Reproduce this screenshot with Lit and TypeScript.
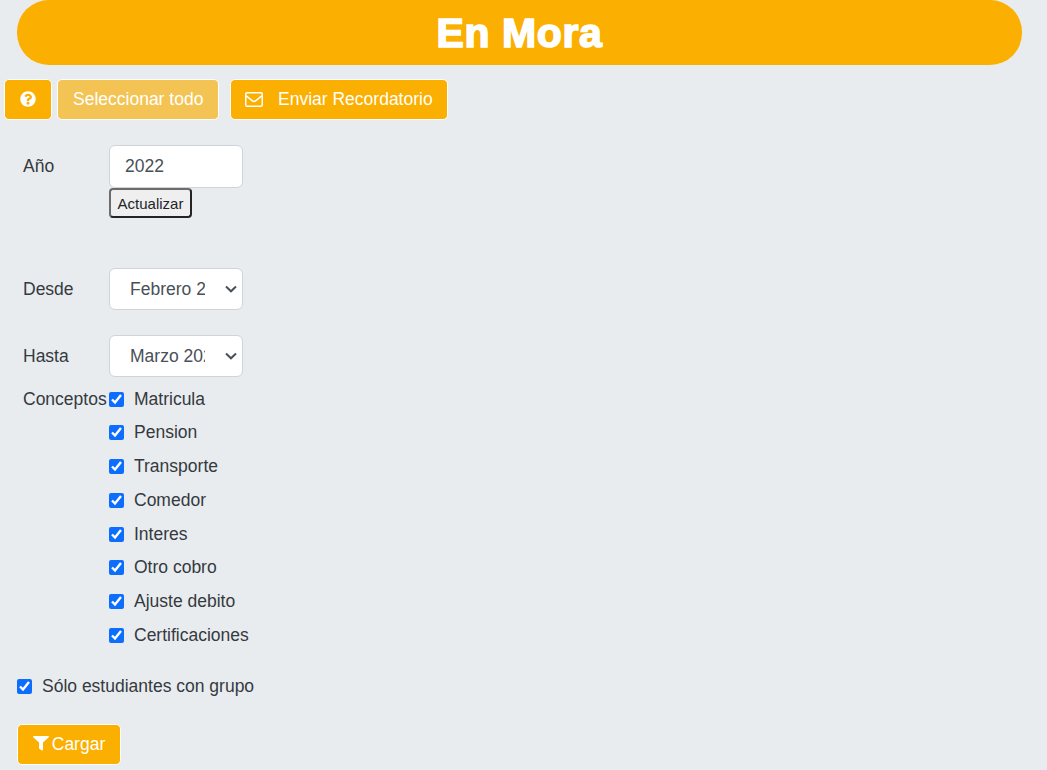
import { LitElement, html, css } from "lit";
import { customElement } from "lit/decorators.js";

const CONCEPTS = ["Matricula", "Pension", "Transporte", "Comedor", "Interes", "Otro cobro", "Ajuste debito", "Certificaciones"];

@customElement("app-root")
export class AppRoot extends LitElement {
  static styles = css`
    :host {
      display: block;
      height: 770px;
      overflow: hidden;
      background: #e9ecef;
      color: #343a40;
      font-family: "Liberation Sans", Arial, sans-serif;
      font-size: 17.5px;
      line-height: 24px;
    }
    .banner {
      margin: 0 25px 0 17px;
      height: 65px;
      border-radius: 32px;
      background: #fbaf00;
      color: #fff;
      display: flex;
      align-items: center;
      justify-content: center;
    }
    h1 {
      margin: 0;
      font-size: 41px;
      line-height: 48px;
      font-weight: 700;
      -webkit-text-stroke: 1.6px #fff;
      letter-spacing: 0.6px;
    }
    .toolbar {
      display: flex;
      margin: 14px 0 0 4px;
      height: 41px;
    }
    .btn {
      box-sizing: border-box;
      display: inline-flex;
      align-items: center;
      height: 41px;
      border: 1px solid #fff;
      border-radius: 5px;
      background: #fbaf00;
      color: #fff;
      font: inherit;
      padding: 0 15px 2px;
      white-space: nowrap;
    }
    .btn svg { flex-shrink: 0; }
    .help { width: 48px; justify-content: center; padding: 0 0 1px; margin-right: 5px; }
    .all { width: 162px; margin-right: 11px; background: #f3c454; }
    .send { width: 218px; gap: 15px; padding-left: 14px; padding-right: 0; }
    .send svg { margin-top: 2px; }
    .load { width: 104px; gap: 3px; justify-content: center; padding: 0 0 2px; margin: 0 0 0 17px; }
    .form { padding: 25px 0 0 23px; }
    .row { display: grid; grid-template-columns: 86px 1fr; }
    .row label { display: block; }
    .lab { padding-top: 9px; }
    input[type="text"], select {
      box-sizing: border-box;
      display: block;
      width: 134px;
      height: 43px;
      border: 1px solid #ced4da;
      border-radius: 6px;
      background-color: #fff;
      color: #495057;
      font: inherit;
      margin: 0;
    }
    input[type="text"] { padding: 0 15px; }
    select {
      height: 42px;
      padding: 0 37px 0 20px;
      appearance: none;
      background-image: url("data:image/svg+xml,%3Csvg xmlns='http://www.w3.org/2000/svg' width='12' height='8' viewBox='0 0 12 8'%3E%3Cpath d='M1 1.5 6 6.3 11 1.5' fill='none' stroke='%23495057' stroke-width='2'/%3E%3C/svg%3E");
      background-repeat: no-repeat;
      background-position: right 5.5px center;
    }
    .update {
      display: block;
      box-sizing: border-box;
      width: 83px;
      height: 30px;
      padding: 0;
      border: 2px solid #212529;
      border-color: #6c6c6c #212529 #212529 #6c6c6c;
      border-radius: 4px;
      background: #efefef;
      color: #212529;
      font: 15px "Liberation Sans", Arial, sans-serif;
    }
    .desde { margin-top: 50px; }
    .hasta { margin-top: 25px; }
    .concepts { margin-top: 10px; }
    .concepts .lab { padding-top: 0; white-space: nowrap; }
    .checks { display: flex; flex-direction: column; }
    .check { display: flex; align-items: center; height: 24px; margin-bottom: 9.75px; gap: 10px; }
    .check input { width: 15px; height: 15px; margin: 0; accent-color: #0d6efd; }
    .check span { position: relative; top: -0.5px; }
    .solo { margin: 17px 0 0 17px; }
    .load-wrap { margin-top: 26px; }
  `;

  private opt(label: string) {
    return html`<div class="check"><input type="checkbox" checked /><span>${label}</span></div>`;
  }

  render() {
    return html`
      <div class="banner"><h1>En Mora</h1></div>
      <div class="toolbar">
        <button class="btn help" aria-label="Ayuda">
          <svg width="16" height="16" viewBox="0 0 512 512" fill="#fff"><path d="M504 256c0 137-111 248-248 248S8 393 8 256C8 119 119 8 256 8s248 111 248 248zM263 90c-54 0-89 23-116 63-4 5-3 12 3 16l35 26c5 4 13 3 17-2 18-23 30-36 58-36 21 0 47 13 47 34 0 15-13 23-34 35-25 14-57 31-57 74v6c0 7 5 12 12 12h56c7 0 12-5 12-12v-3c0-29 86-31 86-110 0-60-62-103-119-103zm-7 254c-26 0-47 21-47 47s21 47 47 47 47-21 47-47-21-47-47-47z"/></svg>
        </button>
        <button class="btn all">Seleccionar todo</button>
        <button class="btn send">
          <svg width="18" height="15" viewBox="0 0 18 15" fill="none" stroke="#fff" stroke-width="1.5"><rect x=".75" y=".75" width="16.5" height="13.5" rx="1.2"/><path d="M1 3.6 7.4 8.8c1 .8 2.2.8 3.2 0L17 3.6"/></svg>
          <span>Enviar Recordatorio</span>
        </button>
      </div>
      <div class="form">
        <div class="row">
          <label class="lab">Año</label>
          <div>
            <input type="text" value="2022" />
            <button class="update">Actualizar</button>
          </div>
        </div>
        <div class="row desde">
          <label class="lab">Desde</label>
          <select><option>Febrero 2022</option></select>
        </div>
        <div class="row hasta">
          <label class="lab">Hasta</label>
          <select><option>Marzo 2022</option></select>
        </div>
        <div class="row concepts">
          <label class="lab">Conceptos</label>
          <div class="checks">${CONCEPTS.map((c) => this.opt(c))}</div>
        </div>
      </div>
      <div class="check solo"><input type="checkbox" checked /><span>Sólo estudiantes con grupo</span></div>
      <div class="load-wrap">
        <button class="btn load">
          <svg width="16" height="14.5" viewBox="0 0 512 512" preserveAspectRatio="none" fill="#fff"><path d="M487 0H25C3 0-8 27 8 42l184 184v206c0 8 4 15 10 20l80 56c16 11 38 0 38-20V226L504 42c16-15 5-42-17-42z"/></svg>
          <span>Cargar</span>
        </button>
      </div>
    `;
  }
}
